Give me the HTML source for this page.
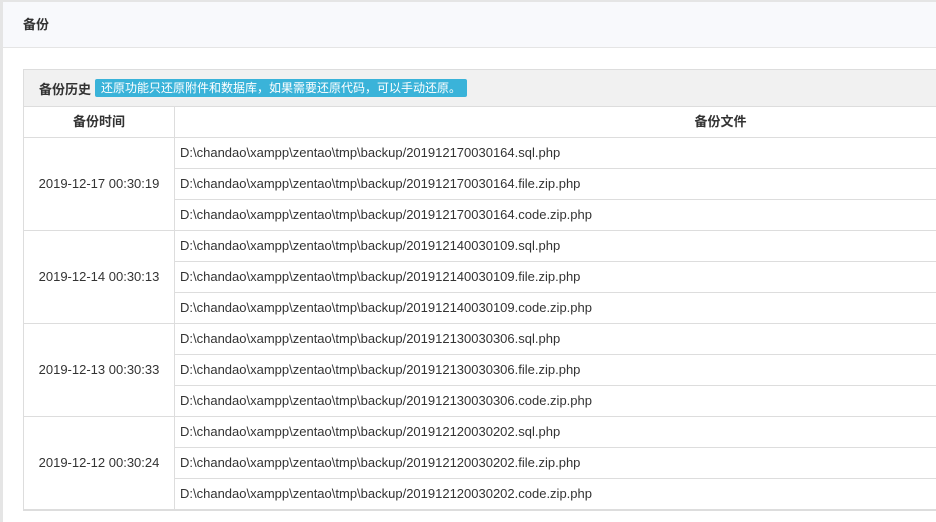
<!DOCTYPE html>
<html><head><meta charset="utf-8"><style>
body{margin:0;width:936px;height:508px;overflow:hidden;background:#e5e5e5;font-family:"Liberation Sans","Noto Sans CJK SC",sans-serif;font-size:13px;color:#333}
.card{position:absolute;left:3px;top:2px;width:1300px;height:520px;background:#fff}
.hd{height:45px;background:#f8f9fc;border-bottom:1px solid #e5e5e5;line-height:45px;padding-left:20px;font-weight:bold}
.panel{position:absolute;left:20px;top:67px;width:1243px;border:1px solid #ddd}
.ph{height:36px;background:#f1f1f1;border-bottom:1px solid #ddd;display:flex;align-items:center;padding-left:15px;font-weight:bold}
.lbl{background:#3ab3d9;color:#fff;font-weight:normal;font-size:12px;padding:1px 6px;border-radius:2px;margin-left:4px;line-height:16px}
table{border-collapse:collapse;width:100%}
td,th{border:1px solid #ddd;height:29px;padding:0 5px 1px;text-align:left;line-height:14px}
th{text-align:center;font-weight:bold}
tr>*:first-child{border-left:none}
td.t{text-align:center;width:140px}
</style></head><body><div class="card">
<div class="hd">备份</div>
<div class="panel"><div class="ph">备份历史<span class="lbl">还原功能只还原附件和数据库，如果需要还原代码，可以手动还原。</span></div>
<table>
<tr><th style="width:140px;border-top:none">备份时间</th><th style="border-top:none">备份文件</th></tr>
<tr><td class="t" rowspan="3">2019-12-17 00:30:19</td><td>D:\chandao\xampp\zentao\tmp\backup/201912170030164.sql.php</td></tr>
<tr><td>D:\chandao\xampp\zentao\tmp\backup/201912170030164.file.zip.php</td></tr>
<tr><td>D:\chandao\xampp\zentao\tmp\backup/201912170030164.code.zip.php</td></tr>
<tr><td class="t" rowspan="3">2019-12-14 00:30:13</td><td>D:\chandao\xampp\zentao\tmp\backup/201912140030109.sql.php</td></tr>
<tr><td>D:\chandao\xampp\zentao\tmp\backup/201912140030109.file.zip.php</td></tr>
<tr><td>D:\chandao\xampp\zentao\tmp\backup/201912140030109.code.zip.php</td></tr>
<tr><td class="t" rowspan="3">2019-12-13 00:30:33</td><td>D:\chandao\xampp\zentao\tmp\backup/201912130030306.sql.php</td></tr>
<tr><td>D:\chandao\xampp\zentao\tmp\backup/201912130030306.file.zip.php</td></tr>
<tr><td>D:\chandao\xampp\zentao\tmp\backup/201912130030306.code.zip.php</td></tr>
<tr><td class="t" rowspan="3">2019-12-12 00:30:24</td><td>D:\chandao\xampp\zentao\tmp\backup/201912120030202.sql.php</td></tr>
<tr><td>D:\chandao\xampp\zentao\tmp\backup/201912120030202.file.zip.php</td></tr>
<tr><td>D:\chandao\xampp\zentao\tmp\backup/201912120030202.code.zip.php</td></tr>
</table></div></div></body></html>
